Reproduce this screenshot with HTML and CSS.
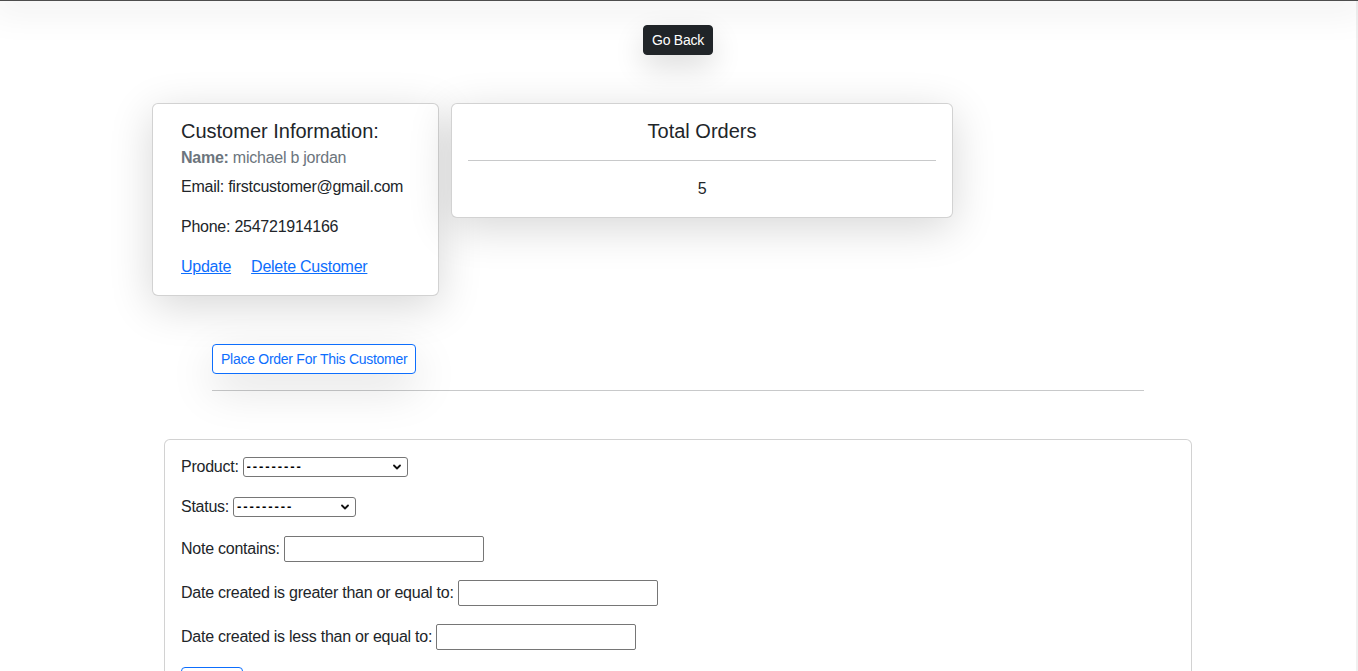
FILE: index.html
```html
<!DOCTYPE html>
<html lang="en">
<head>
<meta charset="utf-8">
<title>Customer</title>
<link rel="stylesheet" href="styles.css">
</head>
<body>
<div class="topbar"></div>
<div class="frame">
  <main class="page">
    <div class="back-row">
      <a class="btn btn-dark" href="#">Go Back</a>
    </div>

    <section class="summary">
      <div class="card customer">
        <h5 class="card-title">Customer Information:</h5>
        <h6 class="card-subtitle"><strong>Name:</strong> michael b jordan</h6>
        <p class="card-text">Email: firstcustomer@gmail.com</p>
        <p class="card-text">Phone: 254721914166</p>
        <p class="card-links"><a href="#" class="card-link">Update</a><a href="#" class="card-link">Delete Customer</a></p>
      </div>
      <div class="card totals">
        <h5 class="card-title center">Total Orders</h5>
        <hr class="rule">
        <p class="count">5</p>
      </div>
    </section>

    <section class="order-action">
      <a class="btn btn-outline" href="#">Place Order For This Customer</a>
      <hr class="rule wide">
    </section>

    <section class="card filter">
      <form class="filter-form">
        <p class="field"><label for="product">Product:</label> <select id="product" class="sel sel-product"><option>---------</option></select></p>
        <p class="field"><label for="status">Status:</label> <select id="status" class="sel sel-status"><option>---------</option></select></p>
        <p class="field"><label for="note">Note contains:</label> <input id="note" class="txt" type="text"></p>
        <p class="field"><label for="start">Date created is greater than or equal to:</label> <input id="start" class="txt" type="text"></p>
        <p class="field"><label for="end">Date created is less than or equal to:</label> <input id="end" class="txt" type="text"></p>
        <button class="btn btn-outline search" type="submit">Search</button>
      </form>
    </section>
  </main>
  <div class="edge"></div>
</div>
</body>
</html>
```

FILE: styles.css
```css
* { box-sizing: border-box; }

html, body {
  margin: 0;
  padding: 0;
  background: #fff;
}

body {
  font-family: "Liberation Sans", Arial, sans-serif;
  font-size: 16px;
  line-height: 24px;
  letter-spacing: -0.25px;
  color: #212529;
  overflow: hidden;
}

.topbar {
  height: 1px;
  background: #4d4d4d;
  box-shadow: 0 0 36px 10px rgba(0, 0, 0, 0.08);
  position: relative;
  z-index: 0;
}

.frame {
  display: flex;
  min-height: 670px;
}

.page {
  flex: 1;
  min-width: 0;
}

.edge {
  width: 2px;
  background: #f0f0f0;
}

.back-row {
  display: flex;
  justify-content: center;
  padding-top: 24px;
}

.btn {
  display: inline-block;
  font-size: 14px;
  line-height: 20px;
  letter-spacing: -0.27px;
  padding: 4px 8px;
  border: 1px solid transparent;
  border-radius: 4px;
  text-decoration: none;
  font-family: inherit;
  background: #fff;
}

.btn-dark {
  background: #212529;
  border-color: #212529;
  color: #fff;
  box-shadow: 0 12px 30px rgba(0, 0, 0, 0.14);
}

.btn-outline {
  color: #0d6efd;
  border-color: #0d6efd;
  background: #fff;
}

.summary {
  display: flex;
  align-items: flex-start;
  gap: 12px;
  margin-top: 48px;
  padding-left: 152px;
}

.card {
  background: #fff;
  border: 1px solid rgba(0, 0, 0, 0.175);
  border-radius: 6px;
}

.customer,
.totals {
  box-shadow: 0 10px 44px rgba(0, 0, 0, 0.16);
}

.customer {
  width: 287px;
  padding: 15px 16px 16px 28px;
}

.totals {
  width: 502px;
  padding: 15px 16px 16px;
}

.card-title {
  margin: 0 0 5px;
  font-size: 20px;
  line-height: 24px;
  font-weight: 500;
  letter-spacing: 0;
}

.center { text-align: center; margin-bottom: 0; }

.card-subtitle {
  margin: 0 0 8px;
  font-size: 16px;
  line-height: 19px;
  font-weight: 500;
  color: #6c757d;
}

.card-subtitle strong { font-weight: 700; }

.card-text {
  margin: 0 0 16px;
}

.card-links {
  margin: 0;
  display: flex;
  gap: 20px;
}

.card-link {
  color: #0d6efd;
  text-decoration: underline;
}

.rule {
  border: 0;
  border-top: 1px solid #c8c9ca;
  margin: 17px 0 16px;
  height: 0;
}

.count {
  margin: 0;
  text-align: center;
}

.order-action {
  margin-top: 48px;
  padding-left: 212px;
}

.order-action .btn-outline {
  box-shadow: 0 15px 45px rgba(0, 0, 0, 0.13);
}

.wide {
  width: 932px;
  margin: 16px 0 0;
}

.filter {
  margin: 48px 0 0 164px;
  width: 1028px;
  padding: 15px 16px;
}

.filter-form { margin: 0; }

.field {
  margin: 0 0 16px;
  display: flex;
  align-items: center;
  gap: 4px;
  min-height: 24px;
}

.sel {
  appearance: none;
  -webkit-appearance: none;
  height: 20px;
  border: 1px solid #767676;
  border-radius: 3px;
  background: #fff url("data:image/svg+xml;utf8,<svg xmlns='http://www.w3.org/2000/svg' width='8' height='6' viewBox='0 0 8 6'><path d='M1 1.5 L4 4.5 L7 1.5' fill='none' stroke='%23111' stroke-width='1.8' stroke-linecap='round' stroke-linejoin='round'/></svg>") no-repeat right 6px center;
  font-family: "Liberation Sans", Arial, sans-serif;
  font-size: 13px;
  font-weight: 700;
  color: #000;
  padding: 0 18px 0 3px;
  letter-spacing: 1.9px;
  line-height: 18px;
}

.sel-product { width: 165px; }
.sel-status { width: 123px; }

.txt {
  width: 200px;
  height: 26px;
  margin: 1px 0;
  border: 1px solid #767676;
  border-radius: 2px;
  padding: 1px 3px;
  font-size: 13px;
}

.search {
  width: 62px;
  height: 30px;
}
```
